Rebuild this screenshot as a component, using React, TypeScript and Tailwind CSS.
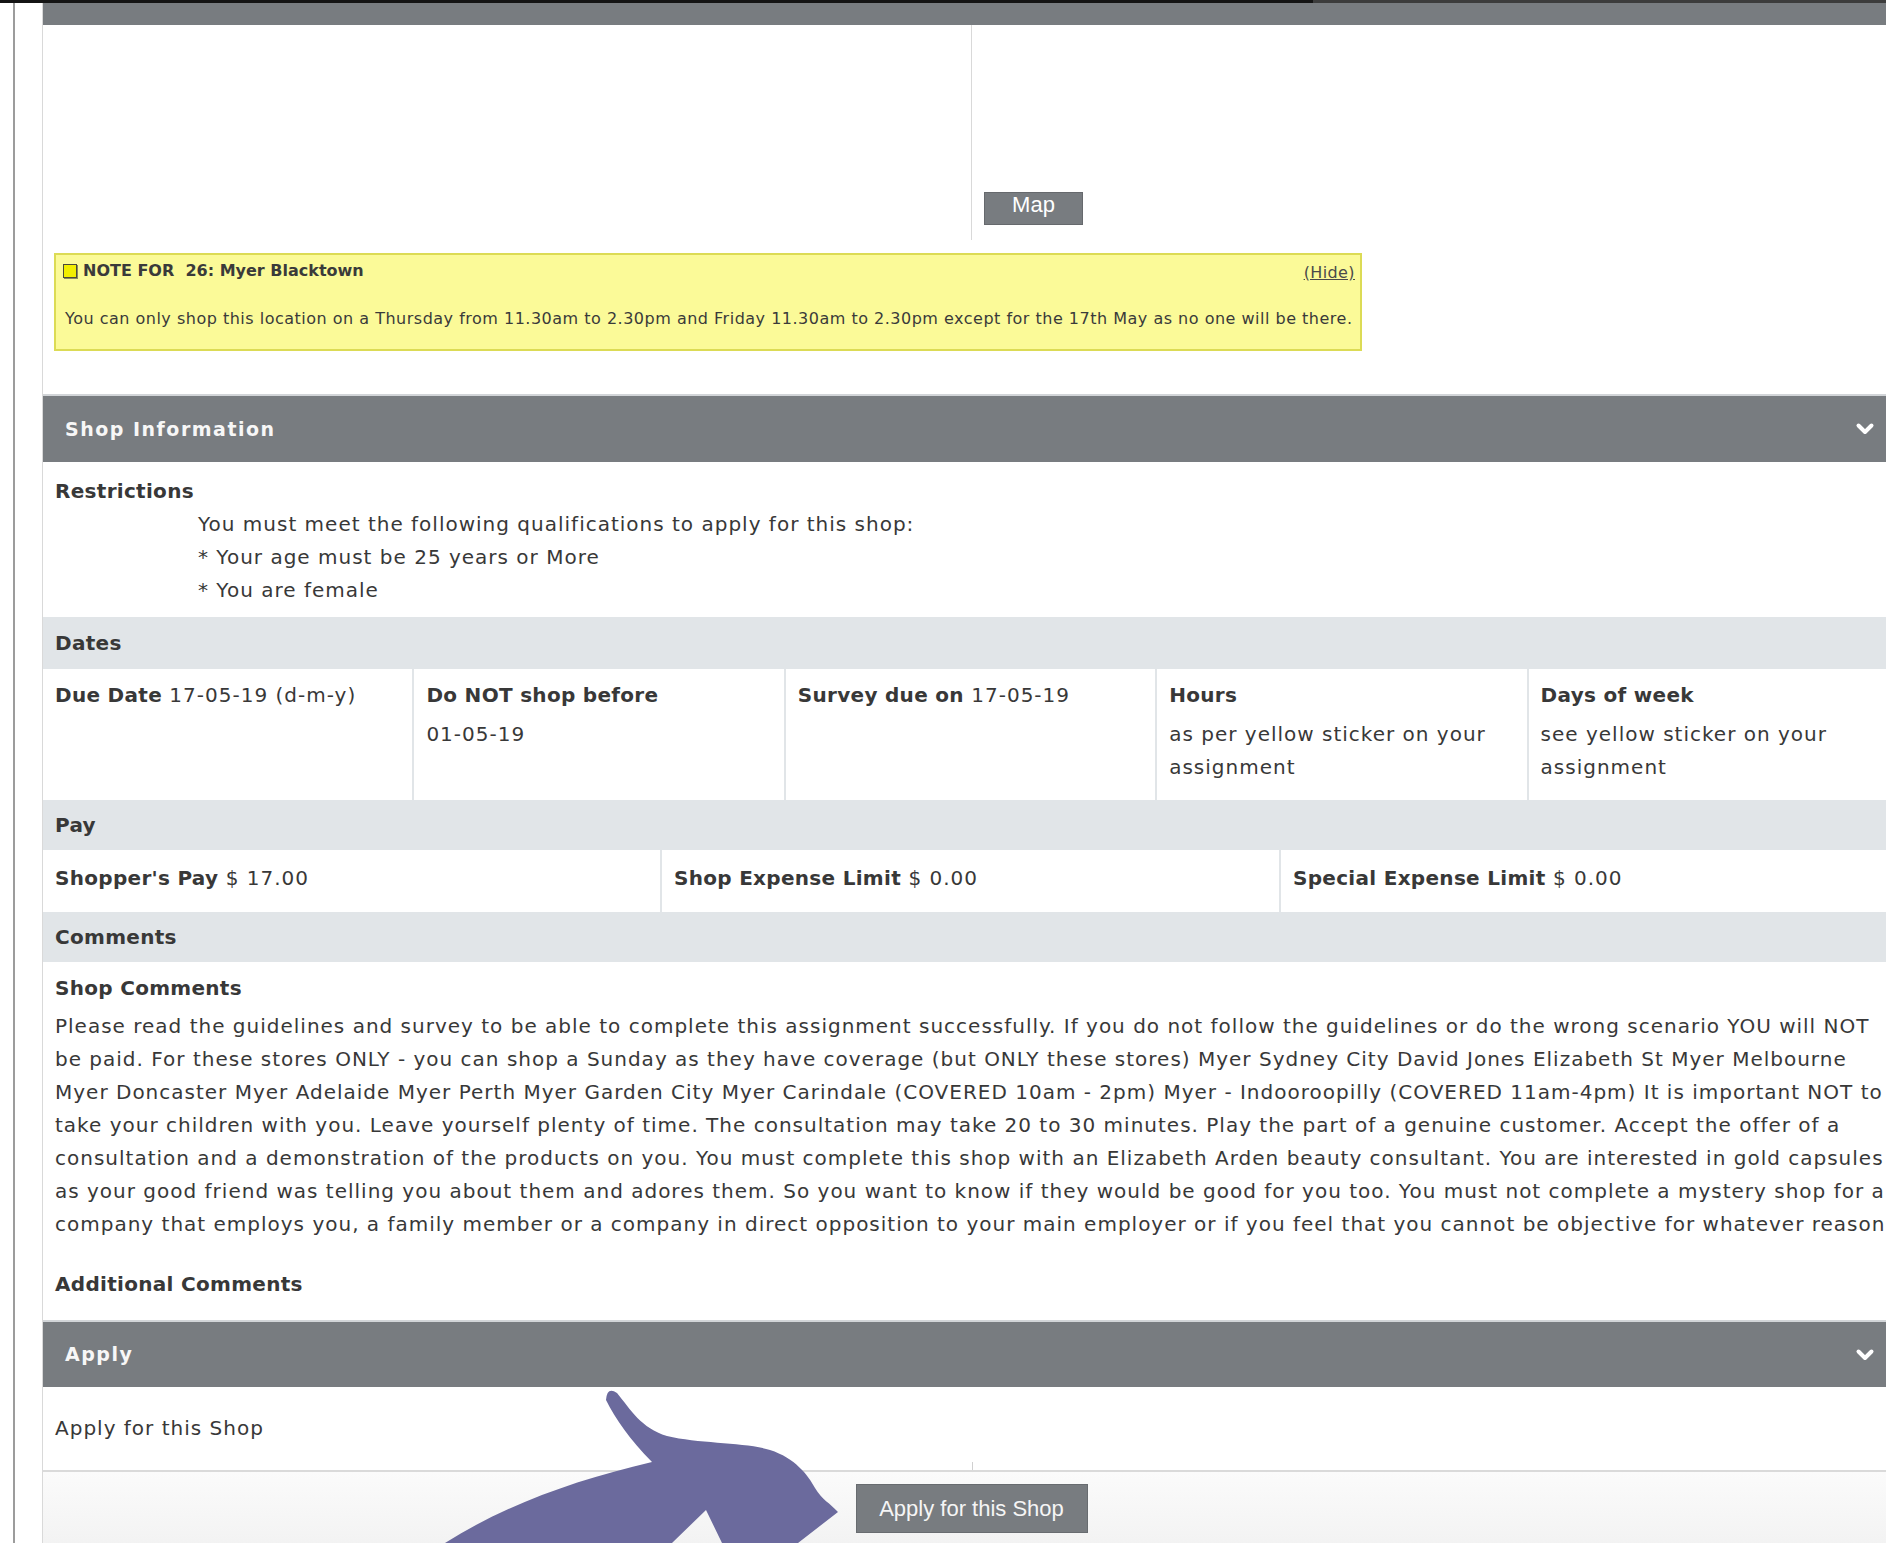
import React from 'react';

const commentLines = [
  'Please read the guidelines and survey to be able to complete this assignment successfully. If you do not follow the guidelines or do the wrong scenario YOU will NOT',
  'be paid. For these stores ONLY - you can shop a Sunday as they have coverage (but ONLY these stores) Myer Sydney City David Jones Elizabeth St Myer Melbourne',
  'Myer Doncaster Myer Adelaide Myer Perth Myer Garden City Myer Carindale (COVERED 10am - 2pm) Myer - Indooroopilly (COVERED 11am-4pm) It is important NOT to',
  'take your children with you. Leave yourself plenty of time. The consultation may take 20 to 30 minutes. Play the part of a genuine customer. Accept the offer of a',
  'consultation and a demonstration of the products on you. You must complete this shop with an Elizabeth Arden beauty consultant. You are interested in gold capsules',
  'as your good friend was telling you about them and adores them. So you want to know if they would be good for you too. You must not complete a mystery shop for a',
  'company that employs you, a family member or a company in direct opposition to your main employer or if you feel that you cannot be objective for whatever reason',
];

const dates = [
  { label: 'Due Date', inline: '17-05-19 (d-m-y)' },
  { label: 'Do NOT shop before', lines: ['01-05-19'] },
  { label: 'Survey due on', inline: '17-05-19' },
  { label: 'Hours', lines: ['as per yellow sticker on your', 'assignment'] },
  { label: 'Days of week', lines: ['see yellow sticker on your', 'assignment'] },
];

const pay = [
  { label: "Shopper's Pay", value: '$ 17.00' },
  { label: 'Shop Expense Limit', value: '$ 0.00' },
  { label: 'Special Expense Limit', value: '$ 0.00' },
];

const Chevron = () => (
  <svg width="20" height="14" viewBox="0 0 20 14" className="shrink-0">
    <path d="M3.5 3.5 L10 10 L16.5 3.5" fill="none" stroke="#ffffff" strokeWidth="4" strokeLinecap="round" strokeLinejoin="round" />
  </svg>
);

const PanelHeader = ({ title }: { title: string }) => (
  <div className="flex items-center justify-between h-full bg-[#787c80] pl-[22px] pr-[25px]">
    <span className="text-[19px] font-bold tracking-[1.5px] text-[#f7f7f7]">{title}</span>
    <Chevron />
  </div>
);

const SubHeader = ({ title, h }: { title: string; h: string }) => (
  <div className={`flex items-center bg-[#e1e5e8] px-[12px] font-bold tracking-[0.3px] ${h}`}>{title}</div>
);

const Label = ({ children }: { children: React.ReactNode }) => (
  <span className="font-bold tracking-[0.3px]">{children}</span>
);

const Arrow = () => (
  <svg className="absolute left-0 top-0 pointer-events-none" width="1886" height="1543" viewBox="0 0 1886 1543">
    <path
      d="M606 1400 Q607 1386 617 1393 C631 1410 641 1428 667 1436 C700 1444 745 1442 770 1450 C795 1458 808 1475 815 1488 C822 1500 830 1503 838 1512 L798 1543 L722 1543 L706 1510 L672 1543 L445 1543 C505 1505 575 1480 652 1462 C630 1440 615 1418 606 1400 Z"
      fill="#6b6a9d"
    />
  </svg>
);

export default function App() {
  return (
    <div className="relative w-[1886px] h-[1543px] overflow-hidden bg-white text-[20px] leading-[33px] tracking-[1px] text-[#383838] font-['DejaVu_Sans',sans-serif]">
      <div className="flex h-[3px]">
        <div className="w-[1313px] bg-[#141414]" />
        <div className="flex-1 bg-[#3c3c3c]" />
      </div>

      <div className="flex">
        <div className="w-[42px] shrink-0">
          <div className="ml-[13px] w-[2px] h-[1540px] bg-[#9c9c9c]" />
        </div>

        <div className="w-[1858px] shrink-0 border-l border-[#d9d9d9]">
          <div className="h-[22px] bg-[#787c80]" />

          {/* location block + map */}
          <div className="flex h-[215px]">
            <div className="w-[929px] border-r border-[#d9d9d9]" />
            <div className="flex-1 flex items-end pb-[15px] pl-[12px]">
              <button className="w-[99px] h-[33px] pb-[7px] bg-[#787c80] border border-[#66696d] text-white text-[22px] leading-[24px] tracking-normal font-['Liberation_Sans',sans-serif]">
                Map
              </button>
            </div>
          </div>

          <div className="pt-[13px] pb-[43px] pl-[11px]">
            <div className="w-[1308px] h-[98px] bg-[#fbfa98] border-2 border-[#dcdb55] px-[9px] pt-[4px] text-[16px] leading-[20px] tracking-normal text-[#3a3a3a]">
              <div className="flex items-center justify-between">
                <div className="flex items-center gap-[6px] font-bold">
                  <span className="-ml-[2px] w-[14px] h-[14px] bg-[#f2ee00] border border-[#4a4a3a] shadow-[1px_1px_0_#8a8a60]" />
                  <span className="whitespace-pre">NOTE FOR  26: Myer Blacktown</span>
                </div>
                <span className="underline text-[#4a4a4a] mt-[4px] -mr-[4px] tracking-[0.4px]">(Hide)</span>
              </div>
              <div className="mt-[26px] whitespace-nowrap tracking-[0.5px]">
                You can only shop this location on a Thursday from 11.30am to 2.30pm and Friday 11.30am to 2.30pm except for the 17th May as no one will be there.
              </div>
            </div>
          </div>

          <div className="h-[68px] border-t-2 border-[#d2d5d8]">
            <PanelHeader title="Shop Information" />
          </div>

          <div className="h-[155px] pt-[13px] px-[12px]">
            <Label>Restrictions</Label>
            <div className="ml-[143px]">
              <div>You must meet the following qualifications to apply for this shop:</div>
              <div>* Your age must be 25 years or More</div>
              <div>* You are female</div>
            </div>
          </div>

          <SubHeader title="Dates" h="h-[52px]" />
          <div className="grid grid-cols-5 h-[131px]">
            {dates.map((d, i) => (
              <div key={d.label} className={`pt-[10px] px-[12px] ${i < 4 ? 'border-r-2 border-[#e1e5e8]' : ''}`}>
                <div className="mb-[6px]">
                  <Label>{d.label}</Label>
                  {d.inline && <span> {d.inline}</span>}
                </div>
                {d.lines?.map((l) => (
                  <div key={l}>{l}</div>
                ))}
              </div>
            ))}
          </div>

          <SubHeader title="Pay" h="h-[50px]" />
          <div className="grid grid-cols-3 h-[62px]">
            {pay.map((p, i) => (
              <div key={p.label} className={`pt-[12px] px-[12px] ${i < 2 ? 'border-r-2 border-[#e1e5e8]' : ''}`}>
                <Label>{p.label}</Label> {p.value}
              </div>
            ))}
          </div>

          <SubHeader title="Comments" h="h-[50px]" />
          <div className="h-[358px] pt-[10px] px-[12px]">
            <div className="mb-[5px]">
              <Label>Shop Comments</Label>
            </div>
            {commentLines.map((l) => (
              <div key={l} className="whitespace-nowrap">{l}</div>
            ))}
            <div className="mt-[27px]">
              <Label>Additional Comments</Label>
            </div>
          </div>

          <div className="h-[67px] border-t-2 border-[#d2d5d8]">
            <PanelHeader title="Apply" />
          </div>

          <div className="flex h-[83px]">
            <div className="w-[929px] flex items-center px-[12px]">Apply for this Shop</div>
            <div className="self-end w-px h-[8px] bg-[#d0d0d0]" />
          </div>

          <div className="h-[80px] border-t-2 border-[#dadada] bg-gradient-to-b from-[#fbfbfb] to-[#f2f2f2] pt-[12px] flex justify-center">
            <button className="w-[232px] h-[49px] bg-[#787c80] border border-[#686c70] text-[#f5f5f5] text-[22px] tracking-normal font-['Liberation_Sans',sans-serif]">
              Apply for this Shop
            </button>
          </div>
        </div>
      </div>

      <Arrow />
    </div>
  );
}
